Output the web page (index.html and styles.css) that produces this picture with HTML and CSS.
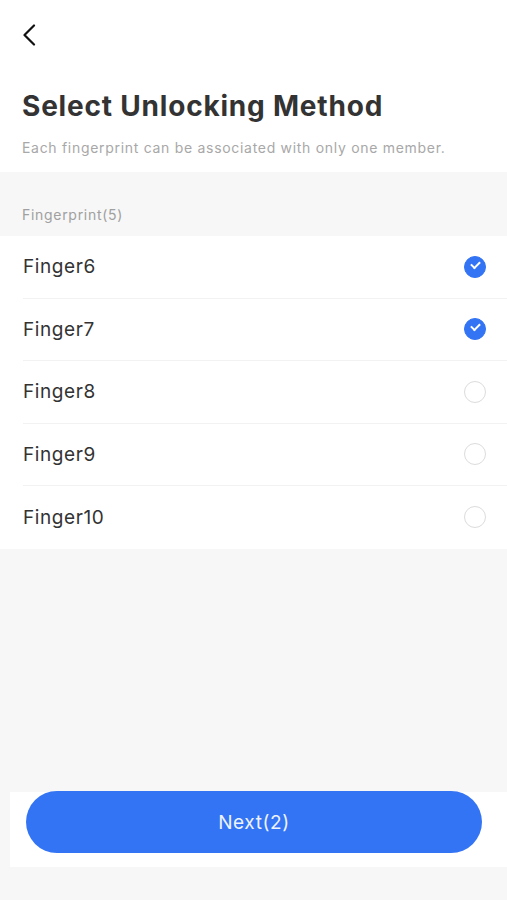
FILE: index.html
```html
<!DOCTYPE html>
<html lang="en">
<head>
  <meta charset="UTF-8">
  <title>Select Unlocking Method</title>
  <link rel="stylesheet" href="styles.css">
</head>
<body>
  <div class="page">
    <header class="top">
      <div class="back">
        <svg width="14" height="22" viewBox="0 0 14 22"><path d="M12 1.5L2.5 11l9.5 9.5" fill="none" stroke="#111" stroke-width="2.2" stroke-linecap="round" stroke-linejoin="round"/></svg>
      </div>
      <h1 class="title">Select Unlocking Method</h1>
      <p class="subtitle">Each fingerprint can be associated with only one member.</p>
    </header>

    <div class="section-label">Fingerprint(5)</div>

    <ul class="list">
      <li class="row"><span>Finger6</span><span class="check on"></span></li>
      <li class="row"><span>Finger7</span><span class="check on"></span></li>
      <li class="row"><span>Finger8</span><span class="check"></span></li>
      <li class="row"><span>Finger9</span><span class="check"></span></li>
      <li class="row"><span>Finger10</span><span class="check"></span></li>
    </ul>

    <div class="spacer"></div>

    <footer class="bottom">
      <button class="next">Next(2)</button>
    </footer>
  </div>
</body>
</html>
```

FILE: styles.css
```css
body {
  margin: 0;
  font-family: Inter, 'Noto Sans', sans-serif;
  background: #f7f7f7;
}

.page {
  display: flex;
  flex-direction: column;
  height: 900px;
}

.top {
  background: #fff;
  padding: 24px 22px 0;
  height: 148px;
}

.back {
  height: 22px;
}

.title {
  margin: 43px 0 0;
  font-size: 28px;
  font-weight: 700;
  color: #333;
  letter-spacing: 0.8px;
  line-height: 34px;
}

.subtitle {
  margin: 16px 0 0;
  font-size: 14px;
  color: #a8a8a8;
  letter-spacing: 0.7px;
  line-height: 18px;
}

.section-label {
  padding: 34px 22px 0;
  height: 30px;
  font-size: 14px;
  color: #a0a0a0;
  letter-spacing: 0.7px;
  line-height: 18px;
}

.list {
  list-style: none;
  margin: 0;
  padding: 0 0 0 23px;
  background: #fff;
}

.row {
  display: flex;
  align-items: center;
  justify-content: space-between;
  height: 62.5px;
  padding-right: 21px;
  font-size: 19px;
  color: #333;
  letter-spacing: 0.6px;
  border-bottom: 1px solid #f2f2f2;
  box-sizing: border-box;
}

.row:last-child {
  border-bottom: none;
}

.check {
  width: 22px;
  height: 22px;
  border-radius: 50%;
  border: 1.5px solid #dcdcdc;
  box-sizing: border-box;
  position: relative;
}

.check.on {
  background: #3374f4;
  border-color: #3374f4;
}

.check.on::after {
  content: '';
  position: absolute;
  left: 6px;
  top: 4px;
  width: 7px;
  height: 4px;
  border-left: 2px solid #fff;
  border-bottom: 2px solid #fff;
  transform: rotate(-45deg);
}

.spacer {
  flex: 1;
}

.bottom {
  margin: 0 0 33px 10px;
  height: 75px;
  background: #fff;
  padding: 0 25px 0 16px;
}

.next {
  display: block;
  width: 100%;
  height: 62px;
  margin-top: -1px;
  border: none;
  border-radius: 31px;
  background: #3374f4;
  color: #eef3ff;
  font-family: Inter, 'Noto Sans', sans-serif;
  font-size: 19px;
  letter-spacing: 0.6px;
}
```
